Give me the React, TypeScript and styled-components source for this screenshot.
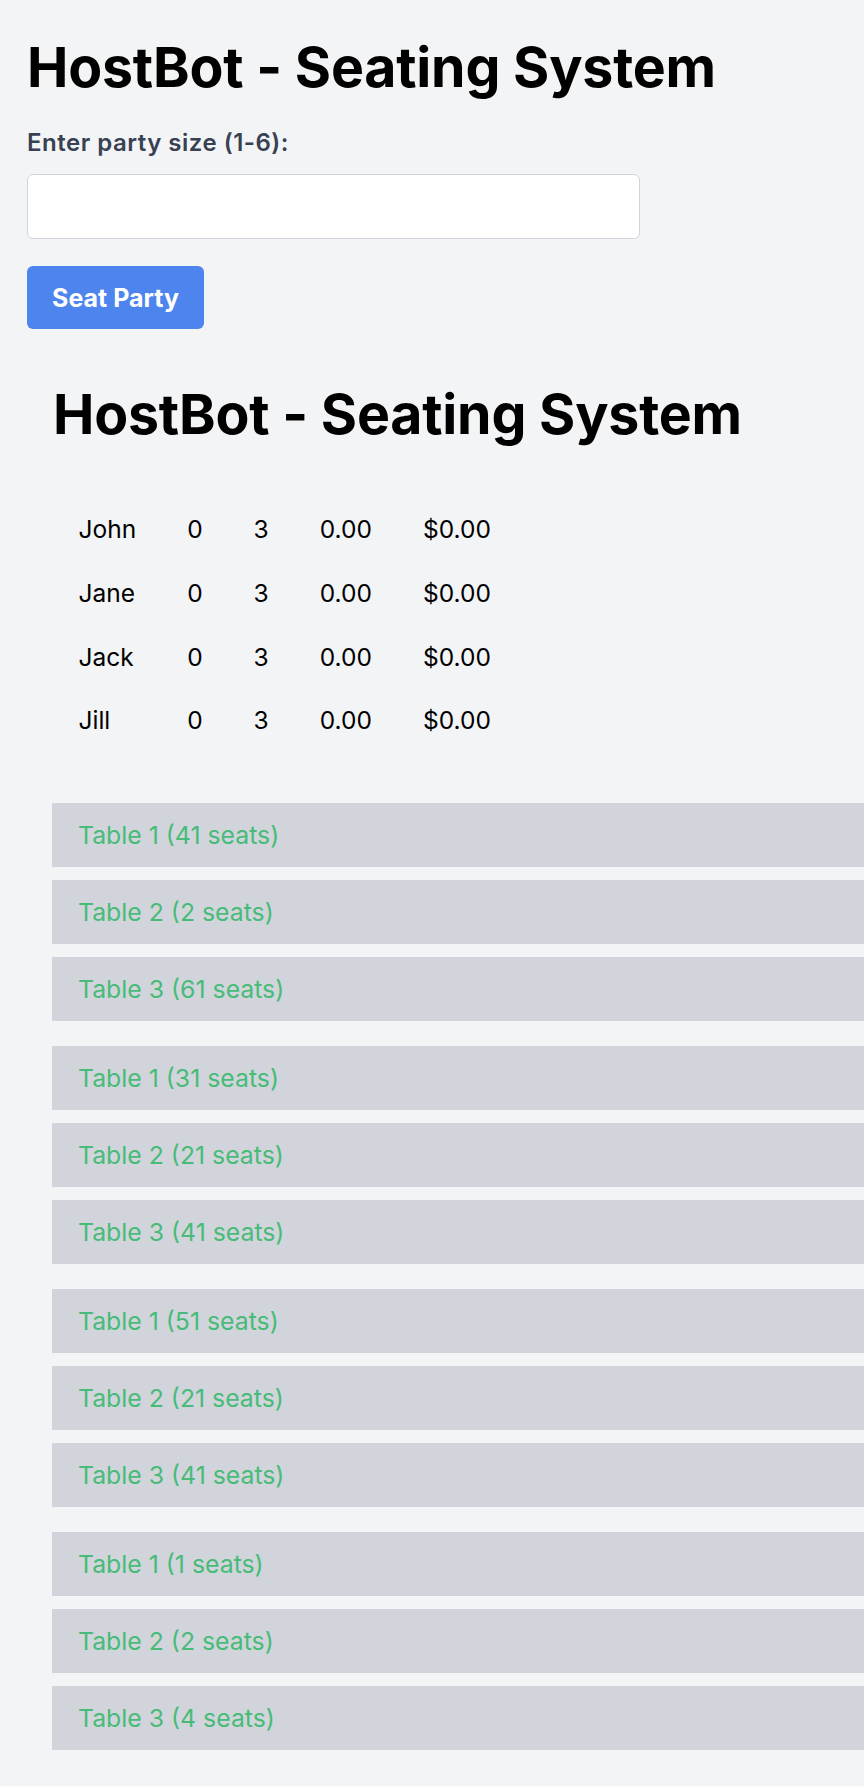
import React from "react";
import styled, { createGlobalStyle } from "styled-components";

const GlobalStyle = createGlobalStyle`
  html, body {
    margin: 0;
    padding: 0;
    background: #f3f4f6;
  }
  body {
    font-family: Inter, "Noto Sans", "Liberation Sans", sans-serif;
    color: #000;
  }
  * { box-sizing: border-box; }
`;

const Page = styled.div`
  padding: 33px 0 36px 27px;
  display: flex;
  flex-direction: column;
`;

const Title = styled.h1<{ $indent?: number }>`
  margin: 0 0 0 ${(p) => p.$indent ?? 0}px;
  font-size: 55.4px;
  line-height: 68px;
  font-weight: 700;
  letter-spacing: -0.2px;
  color: #000;
`;

const Form = styled.form`
  display: flex;
  flex-direction: column;
  align-items: flex-start;
  margin-top: 28px;
`;

const Label = styled.label`
  font-size: 24px;
  line-height: 28px;
  font-weight: 600;
  letter-spacing: 0.5px;
  color: #374151;
`;

const Input = styled.input`
  margin-top: 17px;
  width: 613px;
  height: 65px;
  background: #fff;
  border: 1px solid #d1d5db;
  border-radius: 6px;
  padding: 0 16px;
  font-family: inherit;
  font-size: 22px;
  outline: none;
`;

const Button = styled.button`
  margin-top: 27px;
  width: 177px;
  height: 63px;
  padding: 0;
  border: none;
  border-radius: 6px;
  background: #4d84ee;
  color: #fff;
  font-family: inherit;
  font-size: 25px;
  line-height: 30px;
  font-weight: 700;
  cursor: pointer;
`;

const Board = styled.section`
  margin-left: 25px;
  margin-top: 51px;
  display: flex;
  flex-direction: column;
`;

const Stats = styled.table`
  align-self: flex-start;
  margin: 49px 0 0 1px;
  border-collapse: collapse;
  font-size: 24.5px;
  line-height: 30px;
  color: #000;
`;

const Cell = styled.td`
  padding: 17px 25.5px 16.75px;
  white-space: nowrap;
`;

const Groups = styled.div`
  margin-top: 51px;
  display: flex;
  flex-direction: column;
  gap: 25px;
`;

const Group = styled.div`
  display: flex;
  flex-direction: column;
  gap: 13px;
`;

const TableBar = styled.div`
  background: #d1d5db;
  padding: 17px 26px;
  font-size: 24.8px;
  line-height: 30px;
  color: #48bb78;
`;

const players = ["John", "Jane", "Jack", "Jill"];

const groups: number[][] = [
  [41, 2, 61],
  [31, 21, 41],
  [51, 21, 41],
  [1, 2, 4],
];

export default function App() {
  return (
    <>
      <GlobalStyle />
      <Page>
        <Title>HostBot - Seating System</Title>
        <Form onSubmit={(e) => e.preventDefault()}>
          <Label htmlFor="party">Enter party size (1-6):</Label>
          <Input id="party" type="number" min={1} max={6} />
          <Button type="submit">Seat Party</Button>
        </Form>
        <Board>
          <Title $indent={1}>HostBot - Seating System</Title>
          <Stats>
            <tbody>
              {players.map((name) => (
                <tr key={name}>
                  <Cell>{name}</Cell>
                  <Cell>0</Cell>
                  <Cell>3</Cell>
                  <Cell>0.00</Cell>
                  <Cell>$0.00</Cell>
                </tr>
              ))}
            </tbody>
          </Stats>
          <Groups>
            {groups.map((g, gi) => (
              <Group key={gi}>
                {g.map((seats, i) => (
                  <TableBar key={i}>
                    Table {i + 1} ({seats} seats)
                  </TableBar>
                ))}
              </Group>
            ))}
          </Groups>
        </Board>
      </Page>
    </>
  );
}
